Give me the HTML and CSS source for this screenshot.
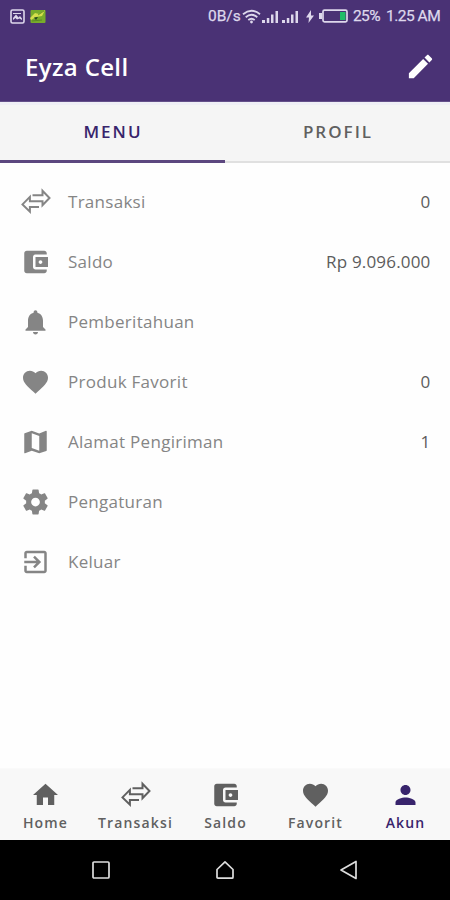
FILE: index.html
```html
<!DOCTYPE html>
<html lang="id">
<head>
<meta charset="utf-8">
<title>Eyza Cell</title>
<link rel="stylesheet" href="styles.css">
</head>
<body>
<svg width="0" height="0" class="defs">
  <symbol id="swap" viewBox="0 0 30 30"><path d="M12 8.500h10V4l7 7.300-7 7.300v-4.100H9.400v-4.300L2 17.700l7.400 7.300v-4.600H18.500" transform="translate(0 -.3)" fill="none" stroke="currentColor" stroke-width="2"/></symbol>
  <symbol id="wallet" viewBox="0 0 24 24"><path fill="currentColor" fill-rule="evenodd" d="M21 18v1c0 1.100-.9 2-2 2H5c-1.110 0-2-.9-2-2V5c0-1.100.89-2 2-2h14c1.100 0 2 .9 2 2v1h-9c-1.110 0-2 .9-2 2v8c0 1.100.89 2 2 2h9zm-9-2h10V8H12v8zm4-2.500c-.83 0-1.500-.67-1.500-1.500s.67-1.500 1.500-1.500 1.500.67 1.500 1.500-.67 1.500-1.500 1.500z"/></symbol>
  <symbol id="bell" viewBox="0 0 24 24"><path fill="currentColor" d="M12 22c1.100 0 2-.9 2-2h-4c0 1.100.89 2 2 2zm6-6v-5c0-3.070-1.640-5.640-4.500-6.320V4c0-.83-.67-1.500-1.500-1.500s-1.500.67-1.500 1.500v.68C7.630 5.360 6 7.920 6 11v5l-2 2v1h16v-1l-2-2z"/></symbol>
  <symbol id="heart" viewBox="0 0 24 24"><path fill="currentColor" d="M12 21.350l-1.450-1.320C5.400 15.360 2 12.280 2 8.500 2 5.420 4.420 3 7.500 3c1.740 0 3.410.81 4.500 2.090C13.090 3.810 14.760 3 16.500 3 19.580 3 22 5.420 22 8.500c0 3.780-3.400 6.860-8.550 11.540L12 21.350z"/></symbol>
  <symbol id="map" viewBox="0 0 24 24"><path fill="currentColor" fill-rule="evenodd" d="M20.500 3l-.16.030L15 5.100 9 3 3.360 4.900c-.21.070-.36.250-.36.480V20.500c0 .28.220.5.500.5l.16-.03L9 18.900l6 2.100 5.640-1.900c.21-.07.360-.25.360-.48V3.500c0-.28-.22-.5-.5-.5zM15 19l-6-2.110V5l6 2.110V19z"/></symbol>
  <symbol id="gear" viewBox="0 0 24 24"><path fill="currentColor" fill-rule="evenodd" d="M19.430 12.980c.04-.32.070-.64.070-.98s-.03-.66-.07-.98l2.110-1.650c.19-.15.240-.42.120-.64l-2-3.460c-.12-.22-.39-.3-.61-.22l-2.490 1c-.52-.4-1.080-.73-1.690-.98l-.38-2.650C14.460 2.180 14.250 2 14 2h-4c-.25 0-.46.180-.49.420l-.38 2.650c-.61.250-1.170.590-1.690.980l-2.490-1c-.23-.09-.49 0-.61.220l-2 3.460c-.13.220-.07.490.12.640l2.110 1.650c-.04.320-.07.650-.07.980s.03.660.07.980l-2.110 1.650c-.19.150-.24.420-.12.640l2 3.460c.12.220.39.300.61.220l2.490-1c.52.400 1.080.730 1.690.980l.38 2.650c.03.240.24.420.49.420h4c.25 0 .46-.18.490-.42l.38-2.650c.61-.25 1.170-.59 1.690-.98l2.490 1c.23.090.49 0 .61-.22l2-3.460c.12-.22.070-.49-.12-.64l-2.110-1.650zM12 15.500c-1.930 0-3.500-1.570-3.500-3.500s1.570-3.500 3.500-3.500 3.500 1.570 3.500 3.500-1.570 3.500-3.500 3.500z"/></symbol>
  <symbol id="exit" viewBox="0 0 24 24"><path fill="currentColor" d="M10.090 15.590L11.500 17l5-5-5-5-1.410 1.410L12.670 11H3v2h9.670l-2.580 2.590zM19 3H5c-1.110 0-2 .9-2 2v4h2V5h14v14H5v-4H3v4c0 1.100.89 2 2 2h14c1.100 0 2-.9 2-2V5c0-1.100-.9-2-2-2z"/></symbol>
  <symbol id="home" viewBox="0 0 24 24"><path fill="currentColor" d="M10 20v-6h4v6h5v-8h3L12 3 2 12h3v8z"/></symbol>
  <symbol id="person" viewBox="0 0 24 24"><path fill="currentColor" d="M12 12c2.210 0 4-1.790 4-4s-1.790-4-4-4-4 1.790-4 4 1.790 4 4 4zm0 2c-2.670 0-8 1.340-8 4v2h16v-2c0-2.660-5.330-4-8-4z"/></symbol>
  <symbol id="pencil" viewBox="0 0 24 24"><path fill="currentColor" d="M3 17.250V21h3.750L17.810 9.940l-3.750-3.750L3 17.250zM20.710 7.040c.39-.39.390-1.020 0-1.410l-2.340-2.340c-.39-.39-1.020-.39-1.410 0l-1.830 1.830 3.750 3.750 1.830-1.830z"/></symbol>
  <symbol id="signal" viewBox="0 0 17 13"><path fill="currentColor" d="M0 10h3v3H0zM4.800 8h2.500v5H4.800zM9 4.500h2.500V13H9zM13.500 1H16v12h-2.500z"/></symbol>
</svg>

<header class="top">
  <div class="status">
    <div class="notes">
      <svg width="15" height="15" viewBox="0 0 15 15"><rect x="1" y="1" width="13" height="13" rx="1.500" fill="none" stroke="#ded8ec" stroke-width="1.600"/><path d="M3 11V9l3-3.500 2.500 3L10 7l2 2.500V11L9.500 9.500 7 10.500 5.500 9z" fill="#ded8ec"/><path d="M3 4.500h8" stroke="#ded8ec"/></svg>
      <svg width="16" height="15" viewBox="0 0 16 15"><rect x=".5" y="1" width="15" height="13" rx="1" fill="#78ac2b"/><path d="M0 9L5 4l4 1 6-4-3 6-6 1-5 3z" fill="#d4df4b"/><path d="M4 8.500l4-.5-2 3z" fill="#24441f"/><path d="M8 6l6-4M2 12l10-1" stroke="#4b7a20" stroke-width=".7"/></svg>
    </div>
    <div class="system">
      <span class="rate">0B/s</span>
      <svg class="wifi" width="19" height="15" viewBox="0 0 19 15" fill="none" stroke="currentColor" stroke-width="1.800"><path d="M1 5.200q8.500-7 17 0M3.700 8.200q5.800-4.800 11.600 0M6.300 11q3.200-2.600 6.400 0"/><circle cx="9.500" cy="13" r="1.400" fill="currentColor" stroke="none"/></svg>
      <svg class="sig1" width="17" height="13"><use href="#signal"/></svg>
      <svg class="sig2" width="17" height="13"><use href="#signal"/></svg>
      <svg class="bolt" width="8" height="13" viewBox="0 0 8 13"><path d="M5 0L0 7.500h3L2.500 13 8 5.500H5z" fill="currentColor"/></svg>
      <svg class="battery" width="29" height="14" viewBox="0 0 29 14"><path d="M0 4h3v6H0z" fill="currentColor"/><rect x="4" y="1.200" width="24" height="11.600" rx="1.500" fill="none" stroke="currentColor" stroke-width="1.700"/><rect x="21" y="3" width="5.500" height="8" fill="#20bd68"/></svg>
      <span class="percent">25%</span>
      <span class="clock">1.25 AM</span>
    </div>
  </div>
  <div class="appbar"><h1>Eyza Cell</h1><svg width="31" height="31"><use href="#pencil"/></svg></div>
</header>

<nav class="tabs"><div class="tab active"><span>MENU</span></div><div class="tab"><span>PROFIL</span></div></nav>

<main class="menu">
  <div class="row"><svg><use href="#swap"/></svg><span>Transaksi</span><b>0</b></div>
  <div class="row"><svg><use href="#wallet"/></svg><span>Saldo</span><b>Rp 9.096.000</b></div>
  <div class="row"><svg><use href="#bell"/></svg><span>Pemberitahuan</span></div>
  <div class="row"><svg><use href="#heart"/></svg><span>Produk Favorit</span><b>0</b></div>
  <div class="row"><svg><use href="#map"/></svg><span>Alamat Pengiriman</span><b>1</b></div>
  <div class="row"><svg><use href="#gear"/></svg><span>Pengaturan</span></div>
  <div class="row"><svg><use href="#exit"/></svg><span>Keluar</span></div>
</main>

<nav class="bottom">
  <div class="item"><svg><use href="#home"/></svg><span>Home</span></div>
  <div class="item"><svg><use href="#swap"/></svg><span>Transaksi</span></div>
  <div class="item"><svg><use href="#wallet"/></svg><span>Saldo</span></div>
  <div class="item"><svg><use href="#heart"/></svg><span>Favorit</span></div>
  <div class="item active"><svg><use href="#person"/></svg><span>Akun</span></div>
</nav>

<footer class="keys">
  <svg width="20" height="20" viewBox="0 0 20 20"><rect x="2" y="2" width="16" height="16" rx="1"/></svg>
  <svg width="20" height="20" viewBox="0 0 20 20"><path d="M2 9.500L10 1.800l8 7.700v7.700q0 1-1 1H3q-1 0-1-1z"/></svg>
  <svg width="20" height="20" viewBox="0 0 20 20"><path d="M17 1.500v17L2 10z"/></svg>
</footer>
</body>
</html>
```
FILE: styles.css
```css
* { box-sizing: border-box; }
body { margin: 0; width: 450px; height: 900px; display: flex; flex-direction: column; background: #fefefe; font-family: "Open Sans", sans-serif; overflow: hidden; }
svg { display: block; flex: none; }
.defs { position: absolute; }
.top { height: 102px; background: #4a3275; color: #fff; border-bottom: 1px solid #64508a; }
.status { height: 32px; display: flex; justify-content: space-between; padding: 0 9px 0 10px; color: #ded8ec; }
.notes, .system { display: flex; align-items: center; }
.notes { gap: 5px; }
.system { font: 15.500px/32px Roboto, sans-serif; -webkit-text-stroke: .25px currentColor; }
.rate { width: 34px; margin-left: -1px; }
.wifi { margin-right: 1px; }
.sig1 { margin-right: 3px; }
.sig2 { margin-right: 7px; }
.bolt { margin-right: 5px; }
.battery { margin-right: 5px; }
.percent { width: 33px; letter-spacing: -.6px; }
.clock { width: 55px; white-space: nowrap; letter-spacing: -.5px; }
.appbar { height: 69px; display: flex; align-items: center; justify-content: space-between; padding: 0 14px 0 25px; }
.appbar h1 { margin: 0; font-size: 24px; font-weight: 600; line-height: 32px; letter-spacing: .35px; }
.tabs { height: 61px; display: flex; background: #f5f5f5; border-top: 3px solid #efeff6; }
.tab { flex: 1; display: flex; justify-content: center; border-bottom: 2px solid #e0e0e0; color: #606060; font-size: 17px; line-height: 54px; font-weight: 600; letter-spacing: 2px; padding-left: 1px; }
.tab.active { color: #38246c; border-bottom: 3px solid #5c477f; }
.menu { flex: 1; padding-top: 9px; }
.row { height: 60px; display: flex; align-items: center; padding: 0 19.500px 0 20px; color: #858585; font-size: 17px; letter-spacing: .28px; }
.row svg { width: 31px; height: 30px; margin-right: 17px; }
.row span, .row b { line-height: 24px; }
.row b { margin-left: auto; font-weight: 400; color: #5c5c5c; letter-spacing: .18px; }
.bottom { height: 72px; display: flex; background: #f8f8f8; border-top: 1px solid #fafafa; }
.item { flex: 1; display: flex; flex-direction: column; align-items: center; padding-top: 11px; color: #606060; font-size: 14px; font-weight: 600; letter-spacing: 1.150px; }
.item svg { width: 31px; height: 30px; margin-left: 1px; }
.item span { line-height: 25px; padding-left: 1px; }
.item.active { color: #38246c; }
.keys { height: 60px; background: #000; display: flex; justify-content: center; align-items: center; gap: 104px; }
.keys svg { fill: none; stroke: #ddd; stroke-width: 1.700; stroke-linejoin: round; }
```
